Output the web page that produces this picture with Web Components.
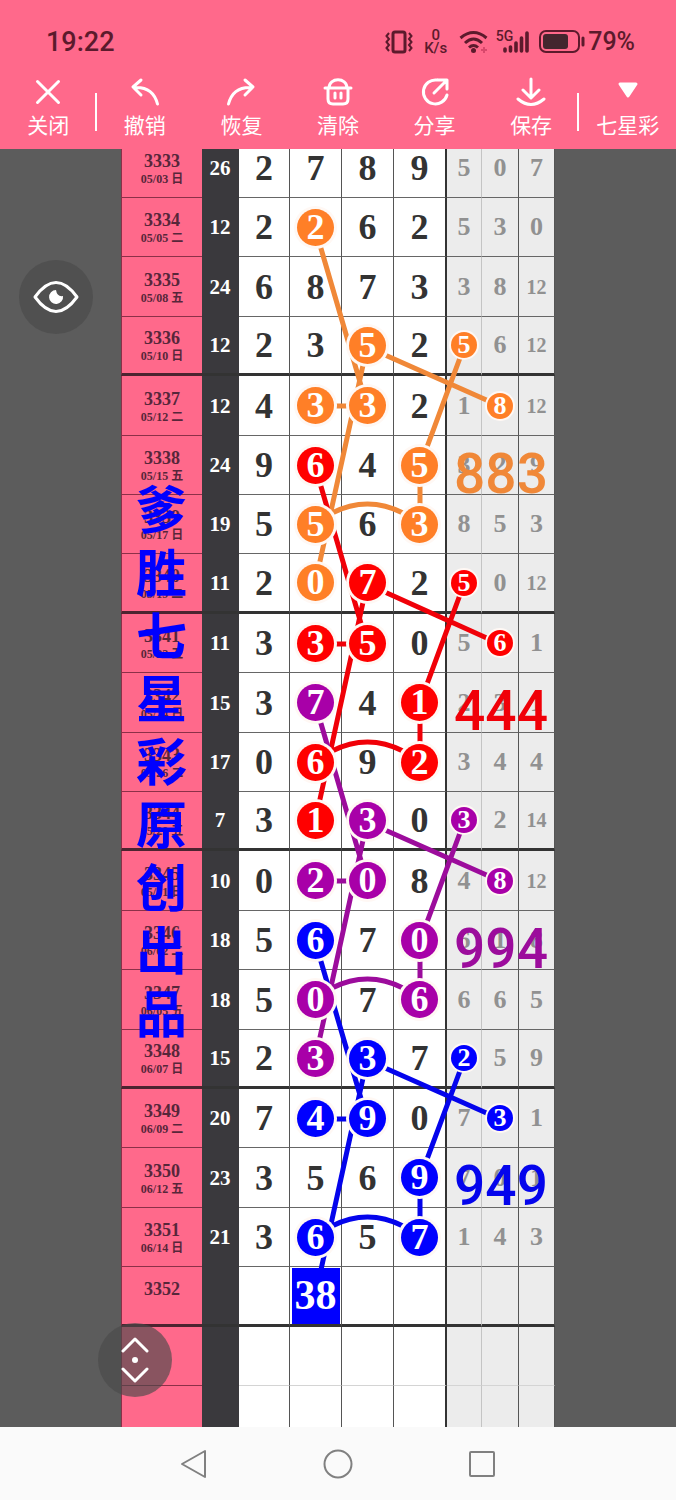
<!DOCTYPE html>
<html lang="zh-CN">
<head>
<meta charset="UTF-8">
<meta name="viewport" content="width=device-width, initial-scale=1">
<title>七星彩</title>
<style>
    body {
        margin: 0;
        background: #5c5c5c;
        font-family: Roboto, "Noto Sans CJK SC", sans-serif;
    }
</style>
</head>
<body>
<trend-app></trend-app>

<script>
// Status bar: clock, network and battery
class StatusBar extends HTMLElement {
    constructor() {
        super();
        this.attachShadow({ mode: 'open' });
    }

    connectedCallback() {
        this.shadowRoot.innerHTML = `
            <style>
                :host {
                    display: flex;
                    align-items: center;
                    justify-content: space-between;
                    box-sizing: border-box;
                    height: 75px;
                    padding: 8px 41px 0 46px;
                    color: #5c1a2c;
                    font-weight: 500;
                }
                time { font-size: 27px; }
                .right { display: flex; align-items: center; }
                svg { display: block; fill: none; stroke: currentColor; }
                .speed {
                    width: 26px;
                    margin: 0 10px;
                    font-size: 15px;
                    line-height: 13px;
                    text-align: center;
                }
                .net {
                    align-self: flex-start;
                    font-size: 14px;
                    line-height: 18px;
                    margin: 0 -11px 0 7px;
                }
                .battery { margin: 0 2px 0 9px; }
                .level { font-size: 25px; }
            </style>
            <time>${this.getAttribute('time')}</time>
            <div class="right">
                <svg width="28" height="24" viewBox="0 0 28 24" stroke-width="3">
                    <rect x="8" y="2" width="12" height="20" rx="2"/>
                    <path d="M4 3 L1.500 6 L4 9 L1.500 12 L4 15 L1.500 18 L4 21 M24 3 L26.500 6 L24 9 L26.500 12 L24 15 L26.500 18 L24 21" stroke-width="2"/>
                </svg>
                <div class="speed">0<br>K/s</div>
                <svg width="30" height="24" viewBox="0 0 30 24" stroke-width="3">
                    <path d="M1.500 8 Q14.500 -3 27.500 8 M6 13 Q14.500 5 23 13 M10 17.500 Q14.500 13.500 19 17.500"/>
                    <circle cx="14.500" cy="20.500" r="2.500" fill="currentColor" stroke="none"/>
                    <path d="M22 20 h6 M25 17 v6" stroke="#d9486c" stroke-width="2"/>
                </svg>
                <span class="net">5G</span>
                <svg width="28" height="24" viewBox="0 0 28 24" stroke-width="3.600" stroke-linecap="round">
                    <path d="M3 19 v2 M8.500 17 v4 M14 13 v8 M19.500 8 v13 M25 3 v18"/>
                </svg>
                <svg class="battery" width="47" height="24" viewBox="0 0 47 24">
                    <rect x="1" y="1" width="39" height="21" rx="6" stroke-width="2"/>
                    <rect x="4" y="4" width="25" height="15" rx="3" fill="#43262e" stroke="none"/>
                    <path d="M44 8 v7" stroke-width="3" stroke-linecap="round"/>
                </svg>
                <span class="level">${this.getAttribute('battery')}</span>
            </div>
        `;
    }
}
customElements.define('status-bar', StatusBar);

const toolIcons = {
    close: '<path d="M5.500 5.500 L26.500 26.500 M26.500 5.500 L5.500 26.500"/>',
    undo: '<path d="M12 4 L4 11 L12 19 M4.500 11.500 Q24 10 28.500 28"/>',
    redo: '<path d="M20 4 L28 11 L20 19 M27.500 11.500 Q8 10 3.500 28"/>',
    clear: '<path d="M3 12 H29 M7 12 C7 1 25 1 25 12 M6 13 V23 Q6 28 11 28 H21 Q26 28 26 23 V13 M13 17 V22 M19 17 V22"/>',
    share: '<path d="M18 4 A12 12 0 1 0 28 19 M15 17 L27 5 M19 4 H28 V13"/>',
    save: '<path d="M16 3 V21 M8 14 L16 22 L24 14 M3 23 Q16 34 29 23"/>',
    menu: '<path d="M8 8 H24 L16 20 Z" fill="currentColor"/>'
};

class ToolButton extends HTMLElement {
    constructor() {
        super();
        this.attachShadow({ mode: 'open' });
    }

    connectedCallback() {
        const icon = this.getAttribute('icon');

        this.shadowRoot.innerHTML = `
            <style>
                :host { display: block; }
                button {
                    display: flex;
                    flex-direction: column;
                    align-items: center;
                    gap: 3px;
                    width: 100%;
                    height: 74px;
                    padding: 1px 0 0;
                    border: 0;
                    background: none;
                    color: #fff;
                    font: 21px/27px "Noto Sans CJK SC", sans-serif;
                    white-space: nowrap;
                    cursor: pointer;
                }
                svg {
                    fill: none;
                    stroke: currentColor;
                    stroke-width: 3;
                    stroke-linecap: round;
                    stroke-linejoin: round;
                }
            </style>
            <button type="button">
                <svg width="32" height="32" viewBox="0 0 32 32" aria-hidden="true">${toolIcons[icon]}</svg>
                <slot></slot>
            </button>
        `;
    }
}
customElements.define('tool-button', ToolButton);

class ToolBar extends HTMLElement {
    constructor() {
        super();
        this.attachShadow({ mode: 'open' });
    }

    connectedCallback() {
        this.shadowRoot.innerHTML = `
            <style>
                :host {
                    display: grid;
                    grid-template-columns: repeat(7, 1fr);
                }
                .divided {
                    background: linear-gradient(#fff, #fff) right center / 2px 38px no-repeat;
                }
            </style>
            <tool-button class="divided" icon="close">关闭</tool-button>
            <tool-button icon="undo">撤销</tool-button>
            <tool-button icon="redo">恢复</tool-button>
            <tool-button icon="clear">清除</tool-button>
            <tool-button icon="share">分享</tool-button>
            <tool-button class="divided" icon="save">保存</tool-button>
            <tool-button icon="menu">七星彩</tool-button>
        `;
    }
}
customElements.define('tool-bar', ToolBar);

// Coloured marker around a drawn digit
class TrendBall extends HTMLElement {
    constructor() {
        super();
        this.attachShadow({ mode: 'open' });
    }

    connectedCallback() {
        this.shadowRoot.innerHTML = `
            <style>
                :host {
                    display: flex;
                    align-items: center;
                    justify-content: center;
                    position: relative;
                    z-index: 2;
                    width: 37px;
                    height: 37px;
                    margin: 0 auto;
                    border-radius: 50%;
                    box-shadow: 0 0 0 3px #fff8f4;
                    background: var(--ball);
                    color: #fff;
                    font-size: 36px;
                    line-height: 37px;
                }
                :host([size="small"]) {
                    width: 26px;
                    height: 26px;
                    box-shadow: 0 0 0 2px #fff8f4;
                    font-size: 26px;
                    line-height: 26px;
                }
                :host([size="square"]) {
                    width: 48px;
                    height: 56px;
                    border-radius: 0;
                    box-shadow: none;
                    font-size: 42px;
                }
            </style>
            <slot></slot>
        `;
    }
}
customElements.define('trend-ball', TrendBall);

// period, date, four digits, three side digits
const draws = [
    ['3333', '05/03 日', [2, 7, 8, 9], [5, 0, 7]],
    ['3334', '05/05 二', [2, 2, 6, 2], [5, 3, 0]],
    ['3335', '05/08 五', [6, 8, 7, 3], [3, 8, 12]],
    ['3336', '05/10 日', [2, 3, 5, 2], [5, 6, 12]],
    ['3337', '05/12 二', [4, 3, 3, 2], [1, 8, 12]],
    ['3338', '05/15 五', [9, 6, 4, 5], [3, 2, 9]],
    ['3339', '05/17 日', [5, 5, 6, 3], [8, 5, 3]],
    ['3340', '05/19 二', [2, 0, 7, 2], [5, 0, 12]],
    ['3341', '05/22 五', [3, 3, 5, 0], [5, 6, 1]],
    ['3342', '05/24 日', [3, 7, 4, 1], [2, 3, 1]],
    ['3343', '05/26 二', [0, 6, 9, 2], [3, 4, 4]],
    ['3344', '05/29 五', [3, 1, 3, 0], [3, 2, 14]],
    ['3345', '05/31 日', [0, 2, 0, 8], [4, 8, 12]],
    ['3346', '06/02 二', [5, 6, 7, 0], [6, 1, 8]],
    ['3347', '06/05 五', [5, 0, 7, 6], [6, 6, 5]],
    ['3348', '06/07 日', [2, 3, 3, 7], [2, 5, 9]],
    ['3349', '06/09 二', [7, 4, 9, 0], [7, 3, 1]],
    ['3350', '06/12 五', [3, 5, 6, 9], [7, 0, 1]],
    ['3351', '06/14 日', [3, 6, 5, 7], [1, 4, 3]],
    ['3352', '', ['', '', '', ''], ['', '', '']],
    ['', '', ['', '', '', ''], ['', '', '']],
    ['', '', ['', '', '', ''], ['', '', '']]
];

// Each pattern starts at a row and repeats the same figure
const patterns = [
    { row: 1, ball: '#ff7f27', line: '#f08838', result: '883' },
    { row: 5, ball: '#ff0000', line: '#f00008', result: '444' },
    { row: 9, ball: '#a800a8', line: '#9c0c9c', result: '994' },
    { row: 13, ball: '#0000ff', line: '#0404ec', result: '949', target: '38' }
];

// [row offset, column] of the marked cells, columns 0-3 digits and 4-6 side digits
const figure = [[0, 1], [2, 2], [2, 4], [3, 1], [3, 2], [3, 5], [4, 3], [5, 1], [5, 3], [6, 1]];
const links = [
    [[0, 1], [3, 2]],
    [[2, 2], [6, 1]],
    [[2, 2], [3, 5]],
    [[2, 4], [4, 3]],
    [[4, 3], [5, 3]],
    [[3, 1], [3, 2]]
];

class TrendBoard extends HTMLElement {
    constructor() {
        super();
        this.attachShadow({ mode: 'open' });
    }

    connectedCallback() {
        this.shadowRoot.innerHTML = `
            <style>
                :host {
                    display: block;
                    padding: 0 121px;
                    overflow: hidden auto;
                    scrollbar-width: none;
                    background: #5c5c5c;
                }
                /* first row is partly tucked under the header */
                .sheet {
                    position: relative;
                    margin-top: -10px;
                }
                table {
                    width: 100%;
                    table-layout: fixed;
                    border-collapse: separate;
                    border-spacing: 0;
                    font-family: "Liberation Serif", "Noto Sans CJK SC", serif;
                    font-weight: 700;
                    color: #333;
                    text-align: center;
                }
                tr { height: 59px; }
                tr:nth-child(5n+3), tr:nth-child(5n) { height: 60px; }
                th, td {
                    box-sizing: border-box;
                    padding: 0;
                    border-right: 1px solid #555;
                    border-bottom: 1px solid #666;
                    background: #fff;
                    font-size: 36px;
                    line-height: 36px;
                }
                th {
                    padding-top: 4px;
                    border-left: 1px solid #8c3048;
                    border-right: 0;
                    border-color: #8c3048;
                    background: #ff698b;
                    color: #57263a;
                    font-size: 18px;
                    line-height: 18px;
                }
                th small {
                    display: block;
                    height: 18px;
                    font-size: 12px;
                    white-space: pre;
                }
                td.sum {
                    border-color: #3a393d;
                    background: #3a393d;
                    color: #fff;
                    font-size: 21px;
                }
                td.last { border-right: 2px solid #333; }
                td.side {
                    background: #ececec;
                    color: #919191;
                    font-size: 26px;
                }
                td.side.pale { border-right-color: #c4c4c4; }
                td.side.wide { font-size: 20px; }
                tr:nth-child(4n) > * { border-bottom: 3px solid #333; }
                tr:nth-child(4n) > th { border-bottom-color: #4c2430; }
                tr:nth-child(n+21) > td:not(.sum) { border-bottom-color: #d4d4d4; }
                svg {
                    position: absolute;
                    inset: 0;
                    z-index: 1;
                    width: 100%;
                    height: 100%;
                    pointer-events: none;
                }
                svg text {
                    font: 500 55px Roboto, sans-serif;
                    text-anchor: middle;
                }
                .mark {
                    position: absolute;
                    top: 337px;
                    left: 15px;
                    z-index: 3;
                    width: 51px;
                    margin: 0;
                    color: #0000ff;
                    font: 700 51px/63px "Noto Sans CJK SC", sans-serif;
                    word-break: break-all;
                }
            </style>
            <div class="sheet">
                <table>
                    <colgroup>
                        <col style="width:81px"><col style="width:37px">
                        <col style="width:51px"><col style="width:52px"><col style="width:52px"><col style="width:53px">
                        <col style="width:35px"><col style="width:37px"><col style="width:36px">
                    </colgroup>
                    <tbody>${draws.map((draw, row) => this.renderRow(draw, row)).join('')}</tbody>
                </table>
                <svg></svg>
                <p class="mark">爹胜七星彩原创出品</p>
            </div>
        `;

        this.drawLinks();
        new ResizeObserver(() => this.drawLinks()).observe(this);
    }

    renderRow([period, date, digits, side], row) {
        const sum = date ? digits.reduce((a, b) => a + b, 0) : '';
        const cells = digits.concat(side).map((value, col) => {
            const names = [];
            if (col === 3) names.push('last');
            if (col > 3) names.push('side');
            if (col === 4) names.push('pale');
            if (value > 9) names.push('wide');
            return `<td class="${names.join(' ')}">${this.renderValue(value, row, col)}</td>`;
        });
        return `<tr><th scope="row">${period}<small>${date}</small></th><td class="sum">${sum}</td>${cells.join('')}</tr>`;
    }

    renderValue(value, row, col) {
        for (const p of patterns) {
            const hit = figure.some(([r, c]) => p.row + r === row && c === col);
            if (!hit) continue;
            if (p.target && row === p.row + 6) {
                return `<trend-ball size="square" style="--ball:${p.ball}">${p.target}</trend-ball>`;
            }
            return `<trend-ball size="${col > 3 ? 'small' : 'large'}" style="--ball:${p.ball}">${value}</trend-ball>`;
        }
        return value;
    }

    center(row, col) {
        const sheet = this.shadowRoot.querySelector('.sheet').getBoundingClientRect();
        const cell = this.shadowRoot.querySelector('tbody').rows[row].cells[col + 2].getBoundingClientRect();
        return [
            Math.round(cell.left - sheet.left + cell.width / 2 - 1),
            Math.round(cell.top - sheet.top + cell.height / 2)
        ];
    }

    drawLinks() {
        let out = '';
        patterns.forEach(p => {
            let d = '';
            links.forEach(([a, b]) => {
                const from = this.center(p.row + a[0], a[1]);
                const to = this.center(p.row + b[0], b[1]);
                d += `M${from} L${to} `;
            });
            // Arc between the two outer balls of the sixth row
            const [x1, y] = this.center(p.row + 5, 1);
            const [x2] = this.center(p.row + 5, 3);
            d += `M${x1 + 17} ${y - 12} Q${(x1 + x2) / 2} ${y - 30} ${x2 - 17} ${y - 12}`;
            out += `<path d="${d}" fill="none" stroke="${p.line}" stroke-width="5"/>`;

            const [rx, ry] = this.center(p.row + 4, 5);
            out += `<text x="${rx + 1}" y="${ry + 27}" fill="${p.line}">${p.result}</text>`;
        });
        this.shadowRoot.querySelector('svg').innerHTML = out;
    }
}
customElements.define('trend-board', TrendBoard);

class FloatButton extends HTMLElement {
    constructor() {
        super();
        this.attachShadow({ mode: 'open' });
    }

    connectedCallback() {
        this.shadowRoot.innerHTML = `
            <style>
                :host { display: block; }
                button {
                    display: flex;
                    align-items: center;
                    justify-content: center;
                    width: 74px;
                    height: 74px;
                    padding: 0;
                    border: 0;
                    border-radius: 50%;
                    background: rgba(74, 74, 74, 0.65);
                    cursor: pointer;
                }
            </style>
            <button type="button" aria-label="${this.getAttribute('label')}"><slot></slot></button>
        `;
    }
}
customElements.define('float-button', FloatButton);

class NavBar extends HTMLElement {
    constructor() {
        super();
        this.attachShadow({ mode: 'open' });
    }

    connectedCallback() {
        this.shadowRoot.innerHTML = `
            <style>
                :host {
                    display: flex;
                    justify-content: center;
                    height: 73px;
                    background: #fafafa;
                }
                button {
                    width: 144px;
                    padding: 0;
                    border: 0;
                    background: none;
                }
                svg {
                    display: block;
                    margin: 0 auto;
                    fill: none;
                    stroke: #808080;
                    stroke-width: 2;
                    stroke-linejoin: round;
                }
            </style>
            <button type="button" aria-label="返回">
                <svg width="30" height="30" viewBox="0 0 30 30"><path d="M3 15 L26 2 V28 Z"/></svg>
            </button>
            <button type="button" aria-label="主页">
                <svg width="30" height="30" viewBox="0 0 30 30"><circle cx="15" cy="15" r="13.500"/></svg>
            </button>
            <button type="button" aria-label="最近任务">
                <svg width="30" height="30" viewBox="0 0 30 30"><rect x="3" y="3" width="24" height="24" rx="1"/></svg>
            </button>
        `;
    }
}
customElements.define('nav-bar', NavBar);

class TrendApp extends HTMLElement {
    constructor() {
        super();
        this.attachShadow({ mode: 'open' });
    }

    connectedCallback() {
        this.shadowRoot.innerHTML = `
            <style>
                :host {
                    display: flex;
                    flex-direction: column;
                    height: 100vh;
                }
                header { background: #ff698b; }
                main {
                    position: relative;
                    flex: 1;
                    min-height: 0;
                }
                trend-board { height: 100%; }
                float-button {
                    position: absolute;
                    z-index: 4;
                }
                .view { top: 111px; left: 19px; }
                .scroll { bottom: 30px; left: 98px; }
                float-button svg {
                    fill: none;
                    stroke: #fff;
                    stroke-width: 3;
                    stroke-linecap: round;
                    stroke-linejoin: round;
                }
            </style>
            <header>
                <status-bar time="19:22" battery="79%"></status-bar>
                <tool-bar></tool-bar>
            </header>
            <main>
                <trend-board></trend-board>
                <float-button class="view" label="显示">
                    <svg width="46" height="32" viewBox="0 0 46 32">
                        <path d="M2 16 Q23 -13 44 16 Q23 45 2 16 Z"/>
                        <path d="M23 9 A7 7 0 1 0 30 15 Q24 16 23 9 Z" fill="#fff" stroke="none"/>
                    </svg>
                </float-button>
                <float-button class="scroll" label="滚动">
                    <svg width="28" height="48" viewBox="0 0 28 48">
                        <path d="M2 15 L14 3 L26 15 M2 33 L14 45 L26 33"/>
                        <circle cx="14" cy="24" r="3" fill="#fff" stroke="none"/>
                    </svg>
                </float-button>
            </main>
            <nav-bar></nav-bar>
        `;
    }
}
customElements.define('trend-app', TrendApp);
</script>
</body>
</html>
